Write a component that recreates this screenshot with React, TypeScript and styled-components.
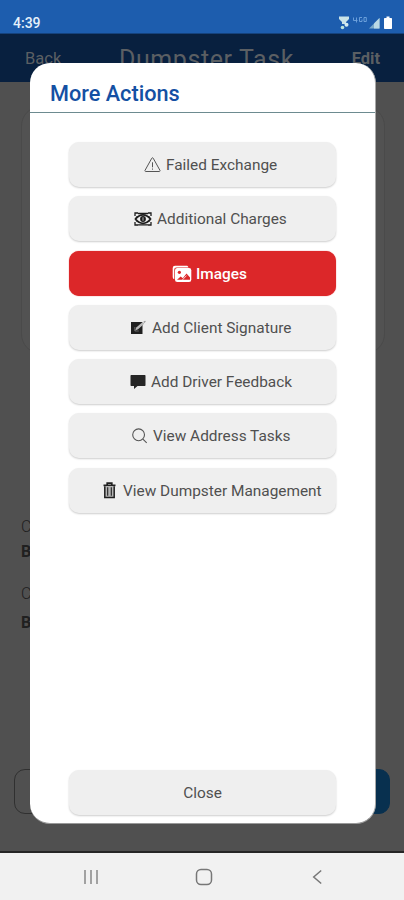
import React from 'react';
import styled, { createGlobalStyle } from 'styled-components';

const GlobalStyle = createGlobalStyle`
  * { box-sizing: border-box; }
  body { margin: 0; font-family: Roboto, "Liberation Sans", sans-serif; }
  button { font: inherit; border: 0; padding: 0; margin: 0; }
`;

const Phone = styled.div`
  position: relative;
  width: 404px;
  height: 900px;
  overflow: hidden;
  display: flex;
  flex-direction: column;
  background: #505050;
`;

const StatusBar = styled.header`
  height: 34px;
  flex: none;
  display: flex;
  align-items: flex-start;
  justify-content: space-between;
  padding: 15px 10px 0 13px;
  background: #1d5dae;
  border-bottom: 1px solid #15427c;
`;

const Clock = styled.span`
  font-size: 14px;
  line-height: 17px;
  font-weight: 500;
  color: #e6f1fb;
`;

const StatusIcons = styled.svg`
  width: 56px;
  height: 16px;
  display: block;
`;

const AppBar = styled.div`
  height: 48px;
  flex: none;
  display: grid;
  grid-template-columns: 66px 1fr 58px;
  padding: 0 24px 0 25px;
  background: #08203f;
  color: #5b5f63;
  align-items: center;
`;

const NavText = styled.span<{ $right?: boolean }>`
  font-size: 16.5px;
  font-weight: ${(p) => (p.$right ? 700 : 400)};
  text-align: ${(p) => (p.$right ? 'right' : 'left')};
`;

const AppTitle = styled.h1`
  margin: 0;
  padding-top: 2px;
  font-size: 25px;
  font-weight: 400;
  letter-spacing: 0.6px;
  text-align: center;
  white-space: nowrap;
`;

const TaskBody = styled.main`
  flex: 1;
  display: flex;
  flex-direction: column;
  padding: 24px 14px 0;
  border-bottom: 2px solid #262626;
`;

const TaskCard = styled.div`
  height: 248px;
  margin: 0 5px 0 7px;
  border: 1px solid #4a4a4a;
  border-radius: 20px;
  background: #525252;
`;

const Details = styled.div`
  margin: 161px 0 0 7px;
  display: flex;
  flex-direction: column;
  gap: 18px;
`;

const Detail = styled.div<{ $gap: number }>`
  display: flex;
  flex-direction: column;
  gap: ${(p) => p.$gap}px;
  font-size: 16px;
  line-height: 24px;
  color: #202020;
  span { font-weight: 300; }
  strong { font-weight: 700; }
`;

const TaskFooter = styled.div`
  display: flex;
  justify-content: space-between;
  margin-top: auto;
  margin-bottom: 37px;
`;

const FooterButton = styled.div<{ $primary?: boolean }>`
  width: 120px;
  height: 45px;
  border-radius: 11px;
  border: 1px solid ${(p) => (p.$primary ? '#08304f' : '#303030')};
  background: ${(p) => (p.$primary ? '#08304f' : 'transparent')};
`;

const SystemNav = styled.nav`
  height: 47px;
  flex: none;
  display: flex;
  justify-content: center;
  align-items: center;
  gap: 95px;
  padding-left: 3px;
  background: #f1f1f1;
  svg { width: 18px; height: 18px; display: block; }
`;

const Dialog = styled.section`
  position: absolute;
  left: 30px;
  top: 63px;
  width: 346px;
  height: 761px;
  border-radius: 20px;
  border-right: 1px solid #a8a8a8;
  border-bottom: 1px solid #999;
  background: #fff;
  display: flex;
  flex-direction: column;
`;

const DialogTitle = styled.h2`
  margin: 0;
  height: 50px;
  flex: none;
  padding: 15px 20px 0;
  border-bottom: 1px solid #6d8b90;
  font-size: 21.7px;
  line-height: 31px;
  font-weight: 500;
  color: #1450a3;
`;

const ActionList = styled.div`
  flex: 1;
  display: flex;
  flex-direction: column;
  gap: 9.3px;
  padding: 29px 39px 8px 39px;
`;

const ActionButton = styled.button<{ $active?: boolean; $last?: boolean; $inset?: number }>`
  height: 45px;
  flex: none;
  display: flex;
  align-items: center;
  justify-content: ${(p) => (p.$inset === undefined ? 'center' : 'flex-start')};
  padding-left: ${(p) => p.$inset ?? 0}px;
  padding-top: ${(p) => (p.$last ? 0 : 1)}px;
  margin-top: ${(p) => (p.$last ? 'auto' : '0')};
  border-radius: 10px;
  background: ${(p) => (p.$active ? '#dc2729' : '#efefef')};
  color: ${(p) => (p.$active ? '#fff' : '#505050')};
  box-shadow: ${(p) => (p.$active ? '0 0 1px #dc2729' : '0 1px 2px rgba(0, 0, 0, 0.2)')};
  font-size: 15.4px;
  font-weight: ${(p) => (p.$active ? 500 : 400)};
  white-space: nowrap;
`;

const Glyph = styled.svg<{ $gap: number }>`
  flex: none;
  display: block;
  margin-right: ${(p) => p.$gap}px;
`;

const WarningIcon = () => (
  <Glyph $gap={5} width="17" height="16" viewBox="0 0 17 16" fill="none" stroke="#555" strokeWidth="1" strokeLinejoin="round">
    <path d="M7.8 1.2 1 13.4c-.3.6 0 1.1.7 1.1h13.6c.7 0 1-.5.7-1.1L9.2 1.2c-.3-.6-1.1-.6-1.4 0Z" />
    <path d="M8.5 5.3v5M8.5 11.5v1.2" />
  </Glyph>
);

const CashIcon = () => (
  <Glyph $gap={5} width="18" height="15" viewBox="0 0 18 15" fill="none" stroke="#1c1c1c">
    <path d="M1 4V1h3M14 1h3v3M1 10v3h3M14 13h3v-3M4 1.5h10M4 12.8h10" strokeWidth="1.3" />
    <path d="M1.5 7C4 3.8 6.5 2.8 9 2.8S14 3.8 16.5 7C14 10.2 11.5 11.3 9 11.3S4 10.2 1.500 7Z" strokeWidth="1.8" />
    <circle cx="9" cy="7" r="2.9" fill="#1c1c1c" stroke="none" />
    <path d="M9 5.3v3.4" stroke="#ddd" strokeWidth=".8" />
    <path d="M3.5 4 2 5.5M14.5 4 16 5.5M3.5 10 2 8.5M14.5 10 16 8.5" />
  </Glyph>
);

const ImagesIcon = () => (
  <Glyph $gap={4} width="20" height="18" viewBox="0 0 20 18">
    <path d="M2.300 14.200A2.200 2.200 0 0 1 .7 12V3A2.300 2.300 0 0 1 3 .8h11.500c1 0 1.700.5 2 1.700H4.600C3.200 2.500 2.300 3.300 2.300 4.500Z" fill="#fff" />
    <rect x="3" y="3" width="16.300" height="14" rx="2.300" fill="#fff" />
    <circle cx="7.400" cy="7.300" r="1.600" fill="#dc2729" />
    <path d="m5 14.800 3.700-3.300 2.100 1.800 3.700-4.800 3.500 4.100v2.200Z" fill="#dc2729" />
    <path d="m10.500 14.800 4-4.200" stroke="#fff" strokeWidth=".8" />
  </Glyph>
);

const SignatureIcon = () => (
  <Glyph $gap={5} width="17" height="15" viewBox="0 0 17 15">
    <path d="M1 2h11.500v12H1Z" fill="#202020" />
    <path d="m5.200 10.400 1-3 6.500-5.300 1.600 1.700-6.300 5.500Z" fill="#b9b9b9" />
    <path d="m13.300 1.700 1.800-1 .7.8-1.500 1.600Z" fill="#999" />
    <path d="M4.800 7v4h4" fill="none" stroke="#999" strokeWidth=".6" />
  </Glyph>
);

const FeedbackIcon = () => (
  <Glyph $gap={5} width="16" height="16" viewBox="0 0 16 16">
    <path d="M1.200 1h13.600c.5 0 .7.300.7.700v9.600c0 .5-.3.700-.7.700H7.500L4 15v-3H1.200c-.5 0-.7-.3-.7-.7V1.700c0-.5.3-.7.7-.7Z" fill="#262626" />
  </Glyph>
);

const SearchIcon = () => (
  <Glyph $gap={5} width="16" height="16" viewBox="0 0 16 16" fill="none" stroke="#555" strokeWidth="1.100">
    <circle cx="6.600" cy="6.800" r="5.900" />
    <path d="m10.900 11.200 3.800 3.600" />
  </Glyph>
);

const TrashIcon = () => (
  <Glyph $gap={7} width="13" height="17" viewBox="0 0 13 17" fill="none" stroke="#202020">
    <path d="M.5 3.300h12M4.200 2.800V1.200h4.600v1.600" strokeWidth="1.700" />
    <path d="M1.800 4.200v11.300h9.400V4.200" fill="#b5b5b5" strokeWidth="1.500" />
    <path d="M4.700 5.300v8.500M8.300 5.300v8.500" strokeWidth="1.100" />
  </Glyph>
);

const actions = [
  { label: 'Failed Exchange', Icon: WarningIcon, inset: 75 },
  { label: 'Additional Charges', Icon: CashIcon, inset: 65 },
  { label: 'Images', Icon: ImagesIcon, inset: 103, active: true },
  { label: 'Add Client Signature', Icon: SignatureIcon, inset: 61 },
  { label: 'Add Driver Feedback', Icon: FeedbackIcon, inset: 61 },
  { label: 'View Address Tasks', Icon: SearchIcon, inset: 63 },
  { label: 'View Dumpster Management', Icon: TrashIcon, inset: 34 },
];

export default function App() {
  return (
    <>
      <GlobalStyle />
      <Phone>
        <StatusBar>
          <Clock>4:39</Clock>
          <StatusIcons viewBox="0 0 56 16">
            <path d="M1 1.500h10v2.500L8 7v2H4V7L1 4Z" fill="#c9e3e8" />
            <circle cx="8.500" cy="9.700" r="2" fill="#d5edef" />
            <circle cx="4.500" cy="12.500" r="1.800" fill="#bce4dc" />
            <path d="M15.500 2.500v3h4M18.500 2.500v5M24 2.500h-2.500v4H24v-2M26 2.500v4h2.300v-4Z" fill="none" stroke="#73a6df" strokeWidth=".9" />
            <path d="M31 13.500 41.500 3v10.500Z" fill="#78a9cb" />
            <path d="m36 8.500 5.500-5.500v10.500H36Z" fill="#b9d9e6" />
            <path d="M48.500 1.500h3V3h1.800c.4 0 .7.300.7.700v9.500c0 .4-.3.800-.7.800h-6.600c-.4 0-.7-.4-.7-.8V3.700c0-.4.300-.7.700-.7h1.800Z" fill="#fff" />
          </StatusIcons>
        </StatusBar>
        <AppBar>
          <NavText>Back</NavText>
          <AppTitle>Dumpster Task</AppTitle>
          <NavText $right>Edit</NavText>
        </AppBar>
        <TaskBody>
          <TaskCard />
          <Details>
            <Detail $gap={1}><span>C</span><strong>B</strong></Detail>
            <Detail $gap={5}><span>C</span><strong>B</strong></Detail>
          </Details>
          <TaskFooter>
            <FooterButton />
            <FooterButton $primary />
          </TaskFooter>
        </TaskBody>
        <SystemNav>
          <svg viewBox="0 0 18 18" fill="none" stroke="#888" strokeWidth="1.500"><path d="M3 2v14M9 2v14M15 2v14" /></svg>
          <svg viewBox="0 0 18 18" fill="none" stroke="#777" strokeWidth="1.500"><rect x="1.500" y="1.500" width="15" height="15" rx="4.500" /></svg>
          <svg viewBox="0 0 18 18" fill="none" stroke="#777" strokeWidth="1.500"><path d="m13.200 2.500-7.500 6.500 7.500 6.500" /></svg>
        </SystemNav>
        <Dialog>
          <DialogTitle>More Actions</DialogTitle>
          <ActionList>
            {actions.map(({ label, Icon, inset, active }) => (
              <ActionButton key={label} $inset={inset} $active={active}>
                <Icon />
                <span>{label}</span>
              </ActionButton>
            ))}
            <ActionButton $last>Close</ActionButton>
          </ActionList>
        </Dialog>
      </Phone>
    </>
  );
}
